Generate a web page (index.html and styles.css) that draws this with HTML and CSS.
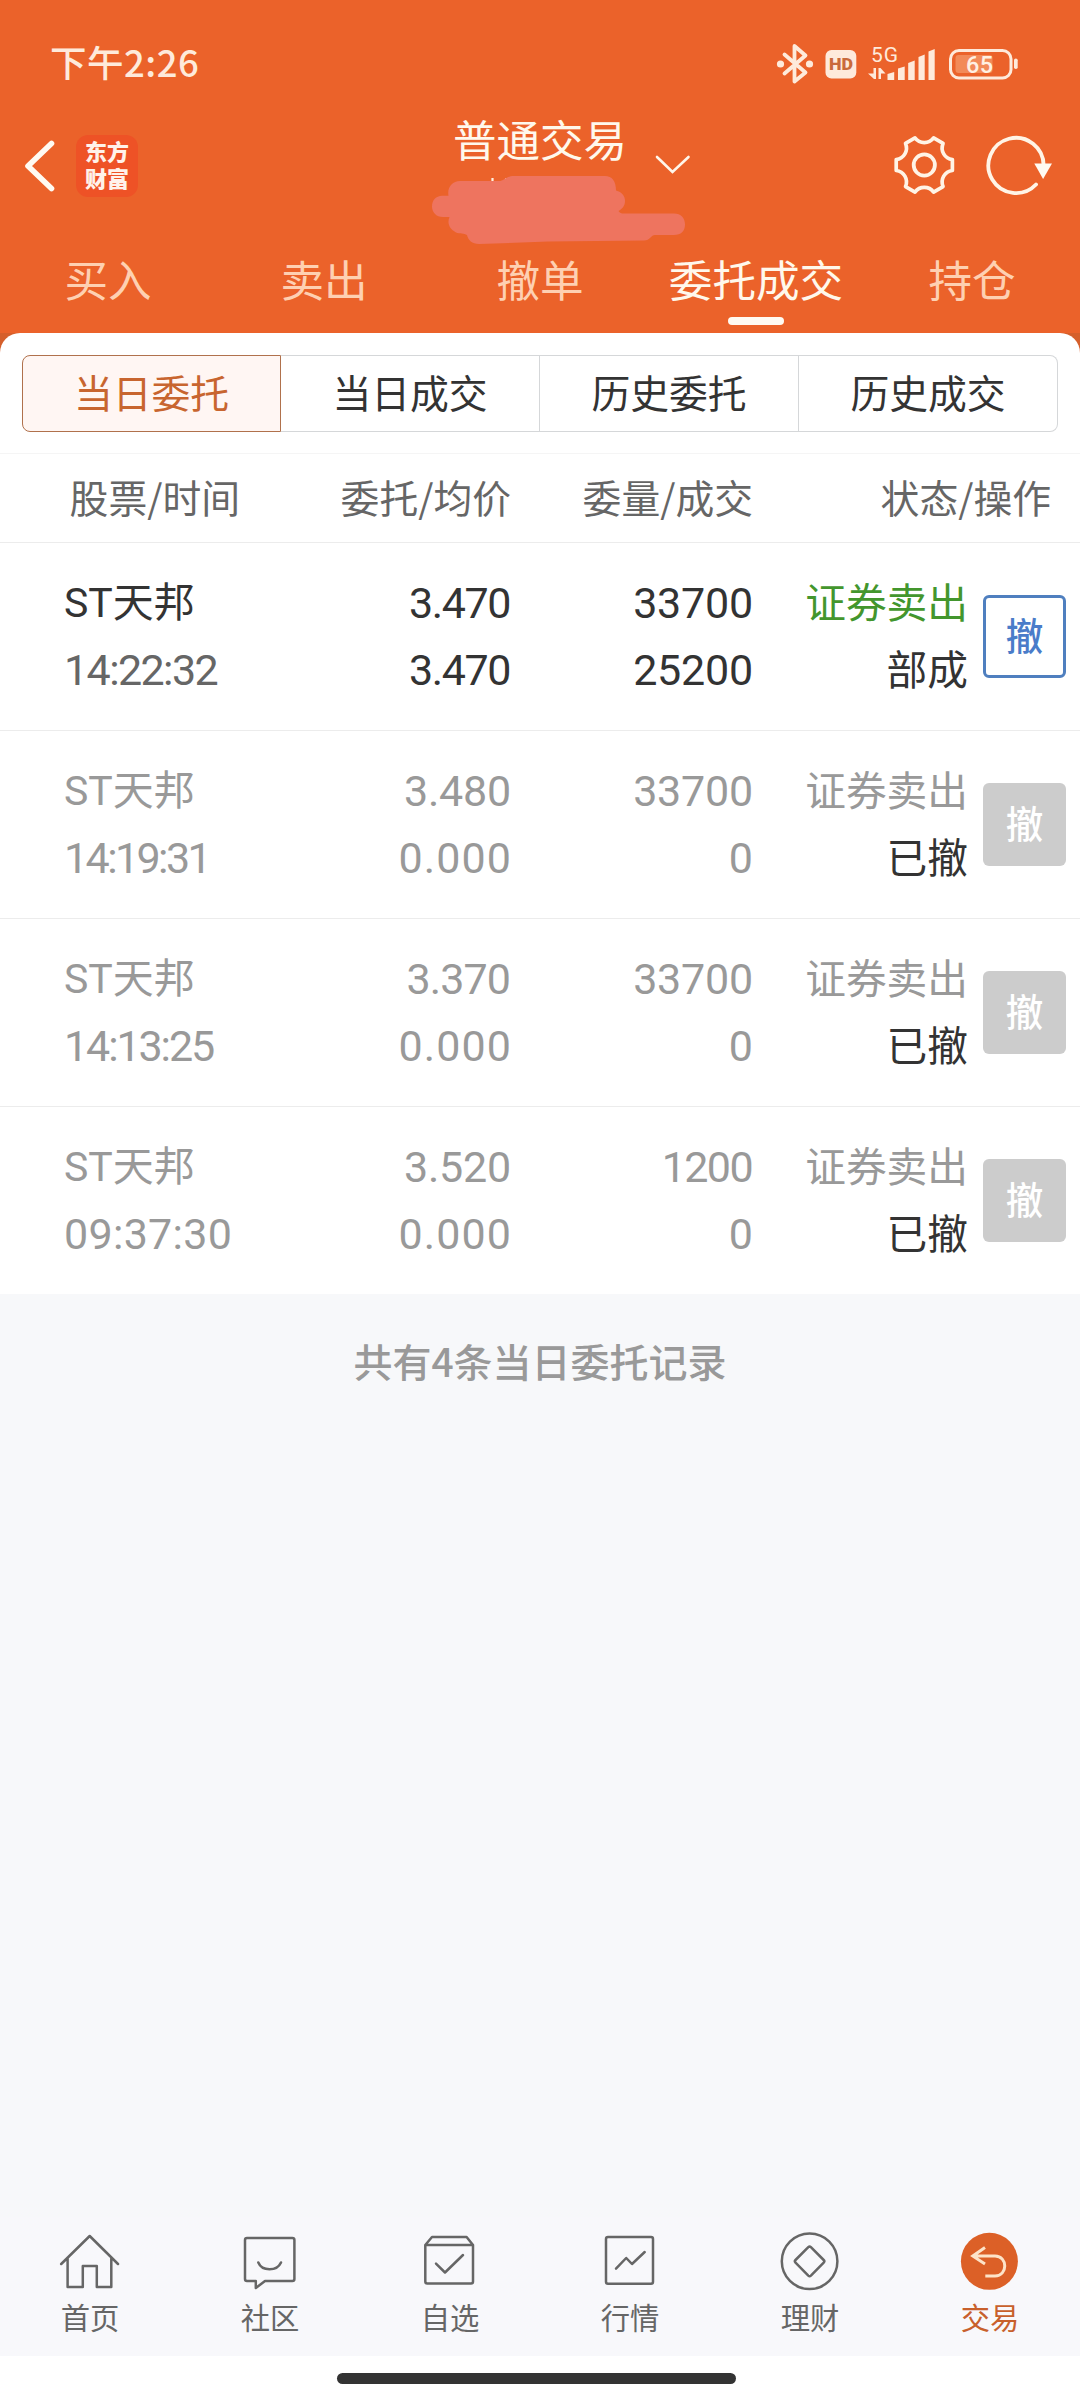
FILE: index.html
```html
<!DOCTYPE html>
<html lang="zh-CN">
<head>
<meta charset="utf-8">
<title>普通交易</title>
<link rel="stylesheet" href="styles.css">
</head>
<body>
<div class="app">
  <header class="header">
    <div class="status">
      <span class="clock">下午2:26</span>
      <svg class="status-icons" width="244" height="44" viewBox="776 42 244 44">
        <g fill="none" stroke="#feeadb" stroke-width="3.8" stroke-linejoin="round" stroke-linecap="round">
          <path d="M784.500 54.500L805.500 72.500L794.500 81.500V46L805.500 55.500L784.500 73.500"/>
          <rect x="950.500" y="50.500" width="60.500" height="27.500" rx="8.500" stroke-width="3"/>
        </g>
        <g fill="#feeadb">
          <circle cx="780.500" cy="64" r="3.600"/><circle cx="809.500" cy="64" r="3.600"/>
          <rect x="825.500" y="50" width="30.800" height="28.500" rx="6"/>
          <path d="M887.500 74l6.700-2v8h-6.700zM898 68.500l6.700-2V80H898zM908.200 63l6.500-2.500V80h-6.500zM918.500 57l6.200-2.500V80h-6.200zM928.500 51.500l6.200-2.500v31h-6.200z"/>
          <path d="M873.500 68h2.500v11h-2l-6-5.500h5.500zM878.500 79V68h2l5 5.500h-4.500V79z"/>
          <rect x="1014" y="58.500" width="3.700" height="10.500" rx="1.800"/>
        </g>
        <rect x="955.500" y="55" width="37" height="18" rx="3" fill="#f28a58"/>
        <text class="s-hd" x="829" y="70" textLength="24" lengthAdjust="spacingAndGlyphs">HD</text>
        <text class="s-5g" x="871" y="62" textLength="27">5G</text>
        <text class="s-bat" x="966" y="73" textLength="27">65</text>
      </svg>
    </div>
    <div class="titlebar">
      <svg class="back" width="32" height="54" viewBox="24 139 32 54"><path d="M51.500 143.500L28 166L51.500 188.500" fill="none" stroke="#fffaf2" stroke-width="5.600" stroke-linecap="round" stroke-linejoin="round"/></svg>
      <div class="logo">东方<br>财富</div>
      <div class="account">
        <div class="title">普通交易</div>
        <svg class="scribble" width="260" height="72" viewBox="430 174 260 72">
          <path d="M492.500 178v4M506.500 178v4" stroke="#fff0e2" stroke-width="2.200"/>
          <path fill="#ee745f" d="M460 181H499C504 181 506 176 514 176H605C612 176 616 181 616 190.500C622 192 625 196 625 201C625 206 622 209 618.500 211C620 213 621 213.500 624 213.500H674C681 213.500 685 218 685 224.500C685 231 681 235 674 235H655C651 235 650 240.500 644 240.500L548 241.500L479 244C472 244 468 240 467 235C464 233 460 234 456 232.500C449 229 447 223 449.500 217H443C436 217 432 212 432 206.500C432 200 436 196 442 195.700H448.500C447 188 452 181 460 181Z"/>
        </svg>
      </div>
      <svg class="chev" width="36" height="20" viewBox="655 155 36 20"><path d="M657 157L672.500 172L688.500 157" fill="none" stroke="#fff6ea" stroke-width="2.600" stroke-linecap="round"/></svg>
      <svg class="tools" width="166" height="68" viewBox="890 132 166 68">
        <g fill="none" stroke="#fff4e6" stroke-width="3.800" stroke-linejoin="round" stroke-linecap="round">
          <path transform="translate(924.300 165) scale(.97)" d="M28.960 -5.630V5.630A12 12 0 0 0 19.350 22.260L9.600 27.900A12 12 0 0 0 -9.600 27.900L-19.350 22.260A12 12 0 0 0 -28.960 5.630V-5.630A12 12 0 0 0 -19.350 -22.260L-9.600 -27.900A12 12 0 0 0 9.600 -27.900L19.350 -22.260A12 12 0 0 0 28.960 -5.630Z"/>
          <circle cx="924.300" cy="165" r="10.600"/>
          <path d="M1036 184.500A27.600 27.600 0 1 1 1043.600 166"/>
        </g>
        <path d="M1034.300 163.500h17.700l-8.900 15.500z" fill="#fffaf2"/>
      </svg>
    </div>
    <nav class="tabs">
      <a>买入</a><a>卖出</a><a>撤单</a><a class="on">委托成交</a><a>持仓</a>
    </nav>
  </header>

  <main class="main">
    <section class="sheet">
      <div class="seg"><a class="on">当日委托</a><a>当日成交</a><a>历史委托</a><a>历史成交</a></div>
    </section>
    <section class="table">
      <div class="row head"><span>股票/时间</span><span>委托/均价</span><span>委量/成交</span><span>状态/操作</span></div>
      <div class="row live">
        <div class="cell"><b>ST天邦</b><i class="t1">14:22:32</i></div>
        <div class="cell"><b class="p1">3.470</b><b class="p1">3.470</b></div>
        <div class="cell"><b class="q1">33700</b><b class="q1">25200</b></div>
        <div class="cell zh"><b>证券卖出</b><em>部成</em></div>
        <button class="cancel">撤</button>
      </div>
      <div class="row">
        <div class="cell"><b>ST天邦</b><i class="t3">14:19:31</i></div>
        <div class="cell"><b class="p2">3.480</b><b class="p4">0.000</b></div>
        <div class="cell"><b class="q1">33700</b><b>0</b></div>
        <div class="cell zh"><b>证券卖出</b><em>已撤</em></div>
        <button class="cancel">撤</button>
      </div>
      <div class="row">
        <div class="cell"><b>ST天邦</b><i class="t2">14:13:25</i></div>
        <div class="cell"><b class="p3">3.370</b><b class="p4">0.000</b></div>
        <div class="cell"><b class="q1">33700</b><b>0</b></div>
        <div class="cell zh"><b>证券卖出</b><em>已撤</em></div>
        <button class="cancel">撤</button>
      </div>
      <div class="row">
        <div class="cell"><b>ST天邦</b><i class="t4">09:37:30</i></div>
        <div class="cell"><b class="p2">3.520</b><b class="p4">0.000</b></div>
        <div class="cell"><b class="q2">1200</b><b>0</b></div>
        <div class="cell zh"><b>证券卖出</b><em>已撤</em></div>
        <button class="cancel">撤</button>
      </div>
    </section>
    <p class="summary">共有4条当日委托记录</p>
  </main>

  <nav class="bottom">
    <a><svg class="ico" viewBox="0 0 60 60"><path d="M1.200 31L29.700 3L58 31M7.600 25V54H22.800V33H36.800V54H51.300V25"/></svg>首页</a>
    <a><svg class="ico" viewBox="0 0 60 60"><path d="M7 5H52.400Q54.400 5 54.400 7V46Q54.400 48 52.400 48H25L15.800 55V48H7Q5 48 5 46V7Q5 5 7 5ZM18.300 29.500C22 38.500 37 38.500 41 29.500"/></svg>社区</a>
    <a><svg class="ico" viewBox="0 0 60 60"><path d="M5.300 12L12 4H46.600L53 12V48.500Q53 50.500 51 50.500H7.300Q5.300 50.500 5.300 48.500ZM5.300 12H53M16 30.700L25 39.500L43 22"/></svg>自选</a>
    <a><svg class="ico" viewBox="0 0 60 60"><rect x="6" y="4" width="47" height="46.700" rx="2"/><path d="M16 35.700L26.200 25L32 31L44.700 19"/></svg>行情</a>
    <a><svg class="ico" viewBox="0 0 60 60"><circle cx="29.600" cy="28.300" r="27.800"/><path d="M28.300 14.200Q29.600 13 30.900 14.200L43.700 27Q45 28.300 43.700 29.600L30.900 42.600Q29.600 43.800 28.300 42.600L15.500 29.600Q14.200 28.300 15.500 27Z"/></svg>理财</a>
    <a class="on"><svg class="ico" viewBox="0 0 60 60"><circle cx="29.400" cy="28.300" r="28.500"/><path d="M25 14.500L12.800 23L25 31M13 23H35C48 23 48 43 35 43H25.300"/></svg>交易</a>
  </nav>
  <div class="home"><span></span></div>
</div>
</body>
</html>
```
FILE: styles.css
```css
* { box-sizing: border-box; }
body {
  margin: 0;
  font-family: "Noto Sans CJK SC", sans-serif;
  color: #333;
  background: #f7f8fa;
}
.app { width: 1080px; height: 2400px; display: flex; flex-direction: column; overflow: hidden; }

/* header */
.header { height: 333px; background: #eb622a; color: #fff8ec; display: flex; flex-direction: column; }
.status { height: 128px; padding: 0 60px 0 50px; display: flex; align-items: center; justify-content: space-between; }
.clock { margin-bottom: 4px; font-size: 36.500px; font-weight: 500; line-height: 44px; color: #feeadb; letter-spacing: 0.5px; }
.status-icons { flex: none; }
.s-hd { font: 900 16px Roboto, sans-serif; fill: #c96a3c; }
.s-5g { font: 400 21px Roboto, sans-serif; fill: #feeadb; }
.s-bat { font: 500 23.500px Roboto, sans-serif; fill: #fff0e2; }

.titlebar { height: 118px; padding-left: 24px; display: flex; }
.back { margin-top: 11px; }
.logo {
  width: 62px; height: 62px; margin: 7px 0 0 20px; padding-top: 2px; border-radius: 12px;
  background: #ee5226; color: #fff2ea; text-align: center;
  font-size: 22px; font-weight: 900; line-height: 27px;
}
.account { width: 260px; margin-left: 292px; display: flex; flex-direction: column; }
.title { height: 46px; margin-left: 23px; font-size: 43.500px; line-height: 22px; white-space: nowrap; }
.scribble { flex: none; }
.chev { margin: 27px 0 0 -35px; }
.tools { margin: 4px 0 0 199px; }

.tabs { flex: 1; display: grid; grid-template-columns: repeat(5, 1fr); }
.tabs a {
  display: flex; flex-direction: column; align-items: center;
  font-size: 43.600px; line-height: 64px; color: #fed0b2;
}
.tabs .on { color: #fff8ec; }
.tabs .on::after { content: ""; width: 56px; height: 8px; margin-top: 7px; border-radius: 4px; background: #fffaf2; }

/* order list */
.main { flex: 1; background: #f7f8fa; }
.sheet { background: linear-gradient(#d55f2b, #d55f2b) top / 100% 20px no-repeat #fff; }
.seg {
  height: 120px; padding: 22px; background: #fff; border-radius: 20px 20px 0 0;
  display: grid; grid-template-columns: repeat(4, 1fr);
}
.seg a {
  height: 77px; border: 1px solid #d5d7d9; border-left-width: 0;
  font-size: 38.800px; line-height: 71px; text-align: center; color: #333;
}
.seg .on { border: 1px solid #b0714c; border-radius: 8px 0 0 8px; background: #fff6f3; color: #c8652f; }
.seg a:last-child { border-radius: 0 8px 8px 0; }

.table { background: #fff; }
.row {
  height: 188px; border-bottom: 1px solid #ececec; padding-right: 14px; color: #999;
  display: grid; grid-template-columns: 64px 200px 247px 242px 215px 98px; align-items: center;
}
.row:last-child { height: 187px; border-bottom: 0; }
.row.head {
  height: 90px; border-top: 1px solid #f5f5f5; color: #666;
  font-size: 38.800px; line-height: 56px; text-align: right;
  grid-template-columns: 240px 271px 242px 298px; padding: 0 0 5px;
}
.cell { display: flex; flex-direction: column; text-align: right; font-family: Roboto, "Noto Sans CJK SC", sans-serif; font-size: 43px; line-height: 67px; white-space: nowrap; }
.cell:first-child { grid-column: 2; text-align: left; font-size: 41px; }
.cell b, .cell i, .cell em { font-weight: 400; font-style: normal; }
.cell i { font-size: 43px; }
.cell.zh { padding-bottom: 5px; font-family: "Noto Sans CJK SC", sans-serif; font-size: 40.700px; }
.cell em { color: #333; }
/* figure tracking */
.cell .t1 { letter-spacing: -1.6px; }
.cell .t2 { letter-spacing: -2.1px; }
.cell .t3 { letter-spacing: -2.6px; }
.cell .t4 { letter-spacing: 0.3px; }
.cell .p1 { letter-spacing: -1.4px; padding-right: 1px; }
.cell .p2 { letter-spacing: -0.2px; }
.cell .p3 { letter-spacing: -0.9px; padding-right: 1px; }
.cell .p4 { letter-spacing: 1.1px; margin-right: -1px; }
.cell .q1 { letter-spacing: -0.2px; }
.cell .q2 { letter-spacing: -1.6px; padding-right: 1px; }
.live { color: #333; }
.live i { color: #666; }
.live .zh b { color: #43962d; }
.cancel {
  width: 83px; height: 83px; margin: 0; padding: 0 0 6px; justify-self: end;
  border: 0; border-radius: 6px; background: #ccc; color: #fff;
  font: 500 37.500px "Noto Sans CJK SC", sans-serif;
}
.live .cancel { border: 3px solid #4f7fbf; background: #fff; color: #4a7cc9; }

.summary { margin: 0; padding-top: 37px; text-align: center; font-size: 39px; font-weight: 500; line-height: 58px; color: #999; }

/* bottom navigation */
.bottom { height: 139px; padding-top: 16px; background: #f8f8fb; display: grid; grid-template-columns: repeat(6, 1fr); }
.bottom a { display: flex; flex-direction: column; align-items: center; font-size: 29.300px; line-height: 43px; color: #666; }
.ico { width: 60px; height: 60px; overflow: visible; margin-bottom: 2px; fill: none; stroke: #666; stroke-width: 2.500; stroke-linecap: round; stroke-linejoin: round; }
.bottom .on { color: #c8602c; }
.on .ico circle { fill: #dc6027; stroke: none; }
.on .ico path { stroke: #fde3c8; stroke-width: 3; stroke-linecap: butt; stroke-linejoin: miter; }
.home { height: 44px; padding: 17px 0 0 337px; background: #fff; }
.home span { display: block; width: 399px; height: 11px; border-radius: 6px; background: #333; }
```
